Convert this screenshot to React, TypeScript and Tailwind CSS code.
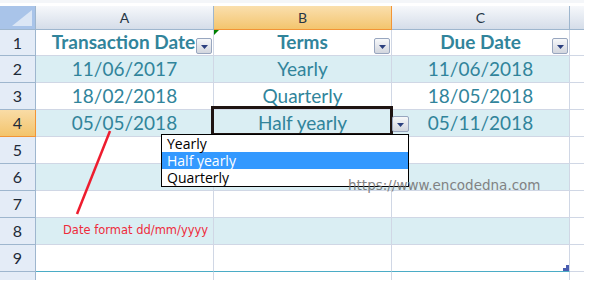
import React from 'react'

const cellFont = { fontFamily: 'Lato, "Open Sans", sans-serif' }

type Row = {
  n: number,
  cells: string[],
  band: boolean,
}

const rows: Row[] = [
  { n: 2, cells: ['11/06/2017', 'Yearly', '11/06/2018'], band: true },
  { n: 3, cells: ['18/02/2018', 'Quarterly', '18/05/2018'], band: false },
  { n: 4, cells: ['05/05/2018', 'Half yearly', '05/11/2018'], band: true },
  { n: 5, cells: ['', '', ''], band: false },
  { n: 6, cells: ['', '', ''], band: true },
  { n: 7, cells: ['', '', ''], band: false },
  { n: 8, cells: ['', '', ''], band: true },
  { n: 9, cells: ['', '', ''], band: false },
]

function FilterButton({ className }: { className: string }) {
  return (
    <div className={"absolute flex items-center justify-center border border-[#98a6bf] rounded-[2px] bg-linear-to-b from-[#f7f8fa] to-[#d2d6de] " + className}>
      <svg width="7" height="4" viewBox="0 0 7 4" className="mt-[2px]">
        <polygon points="0,0 7,0 3.5,4" fill="#2b3f7e" />
      </svg>
    </div>
  )
}

function RowHead({ n, active, last }: { n?: number, active?: boolean, last?: boolean }) {
  return (
    <div
      className={
        "w-[36px] shrink-0 flex items-center justify-center text-[16px] text-[#1e2a38] border-r " +
        (last ? "" : "border-b ") +
        (active
          ? "bg-linear-to-b from-[#f9dca6] to-[#f3c46b] border-[#f29436]"
          : "bg-[#e4ecf7] border-[#9eb6ce]")
      }
    >
      {n}
    </div>
  )
}

export default function App() {
  return (
    <div className="relative w-[593px] h-[290px] bg-white overflow-hidden" style={cellFont}>
      <div className="w-[584px] pt-[3px] border-t-[3px] border-[#f4f6f9]">

        {/* column headers */}
        <div className="flex h-[24px]">
          <div className="relative w-[36px] shrink-0 bg-[#a9c4e9] border-r border-b border-[#9eb6ce]">
            <svg width="20" height="16" viewBox="0 0 20 16" className="absolute right-[3px] bottom-[3px]">
              <polygon points="20,0 20,16 0,16" fill="#dbe6f5" />
            </svg>
          </div>
          <div className="w-[178px] shrink-0 flex items-center justify-center text-[14px] text-[#263545] bg-linear-to-b from-[#f6f8fb] to-[#d5dde9] border-r border-b border-[#9eb6ce]">A</div>
          <div className="w-[178px] shrink-0 flex items-center justify-center text-[14px] text-[#263545] bg-linear-to-b from-[#fadfad] to-[#f3c56d] border-r border-b border-[#f29436]">B</div>
          <div className="w-[178px] shrink-0 flex items-center justify-center text-[14px] text-[#263545] bg-linear-to-b from-[#f6f8fb] to-[#d5dde9] border-r border-b border-[#9eb6ce]">C</div>
          <div className="w-[14px] shrink-0 bg-linear-to-b from-[#f6f8fb] to-[#d5dde9] border-b border-[#9eb6ce]"></div>
        </div>

        {/* row 1: table header */}
        <div className="flex h-[26px]">
          <RowHead n={1} />
          <div className="relative w-[178px] shrink-0 flex items-center justify-center font-bold text-[19px] text-[#31849b] border-r border-b border-[#d0d7e5]">
            <span className="-ml-[2px] whitespace-nowrap">Transaction Date</span>
            <FilterButton className="w-[16px] h-[16px] right-[1px] bottom-[1px]" />
          </div>
          <div className="relative w-[178px] shrink-0 flex items-center justify-center font-bold text-[19px] text-[#31849b] border-r border-b border-[#d0d7e5]">
            <span>Terms</span>
            <svg width="5" height="5" viewBox="0 0 5 5" className="absolute left-0 top-0">
              <polygon points="0,0 5,0 0,5" fill="#008000" />
            </svg>
            <FilterButton className="w-[16px] h-[16px] right-[1px] bottom-[1px]" />
          </div>
          <div className="relative w-[178px] shrink-0 flex items-center justify-center font-bold text-[19px] text-[#31849b] border-r border-b border-[#d0d7e5]">
            <span>Due Date</span>
            <FilterButton className="w-[16px] h-[16px] right-[1px] bottom-[1px]" />
          </div>
          <div className="w-[14px] shrink-0 border-b border-[#d0d7e5]"></div>
        </div>

        {/* data rows */}
        {rows.map((row) => (
          <div key={row.n} className="flex h-[27px]">
            <RowHead n={row.n} active={row.n === 4} />
            {row.cells.map((cell, i) => (
              <div
                key={i}
                className={
                  "relative w-[178px] shrink-0 flex items-center justify-center text-[19px] text-[#31849b] border-r border-[#d0d7e5] " +
                  (row.band ? "bg-[#daeef3] " : "") +
                  (row.n === 9 ? "border-b border-b-[#4bacc6]" : "border-b")
                }
              >
                {cell}
                {row.n === 8 && i === 0 && (
                  <span
                    className="absolute left-[27px] top-[4px] whitespace-nowrap text-[11.5px] text-[#ee2b3b]"
                    style={{ fontFamily: '"DejaVu Sans", Verdana, sans-serif' }}
                  >
                    Date format dd/mm/yyyy
                  </span>
                )}
                {row.n === 9 && i === 2 && (
                  <svg width="6" height="6" viewBox="0 0 6 6" className="absolute right-0 bottom-0">
                    <polygon points="3,0 6,0 6,6 0,6 0,3 3,3" fill="#4a5db0" />
                  </svg>
                )}
              </div>
            ))}
            <div className="w-[14px] shrink-0 border-b border-[#d0d7e5]"></div>
          </div>
        ))}

        {/* partial row 10 */}
        <div className="flex h-[8px]">
          <RowHead last />
          <div className="w-[178px] shrink-0 border-r border-[#d0d7e5]"></div>
          <div className="w-[178px] shrink-0 border-r border-[#d0d7e5]"></div>
          <div className="w-[178px] shrink-0 border-r border-[#d0d7e5]"></div>
        </div>
      </div>

      {/* selected cell B4 */}
      <div className="absolute left-[211px] top-[106px] w-[182px] h-[30px] border-[3px] border-[#1f1412]"></div>
      <FilterButton className="left-[392px] top-[116px] w-[17px] h-[16px]" />

      {/* validation list */}
      <div
        className="absolute left-[161px] top-[134px] w-[248px] h-[53px] bg-white border border-black text-[14px] text-black leading-[17px]"
        style={{ fontFamily: '"Open Sans", "DejaVu Sans", sans-serif' }}
      >
        <div className="pl-[5px] h-[17px]">Yearly</div>
        <div className="pl-[5px] h-[17px] bg-[#3399ff] text-white">Half yearly</div>
        <div className="pl-[5px] h-[17px]">Quarterly</div>
      </div>

      {/* annotation arrow */}
      <svg width="593" height="290" className="absolute left-0 top-0 pointer-events-none">
        <line x1="110" y1="131" x2="77" y2="214" stroke="#ee1c2e" strokeWidth="2.5" />
      </svg>

      {/* watermark */}
      <div
        className="absolute left-[348px] top-[175px] text-[13.5px] text-[#777777] opacity-90 whitespace-nowrap"
        style={{ fontFamily: '"DejaVu Sans", Verdana, sans-serif' }}
      >
        https://www.encodedna.com
      </div>
    </div>
  )
}
